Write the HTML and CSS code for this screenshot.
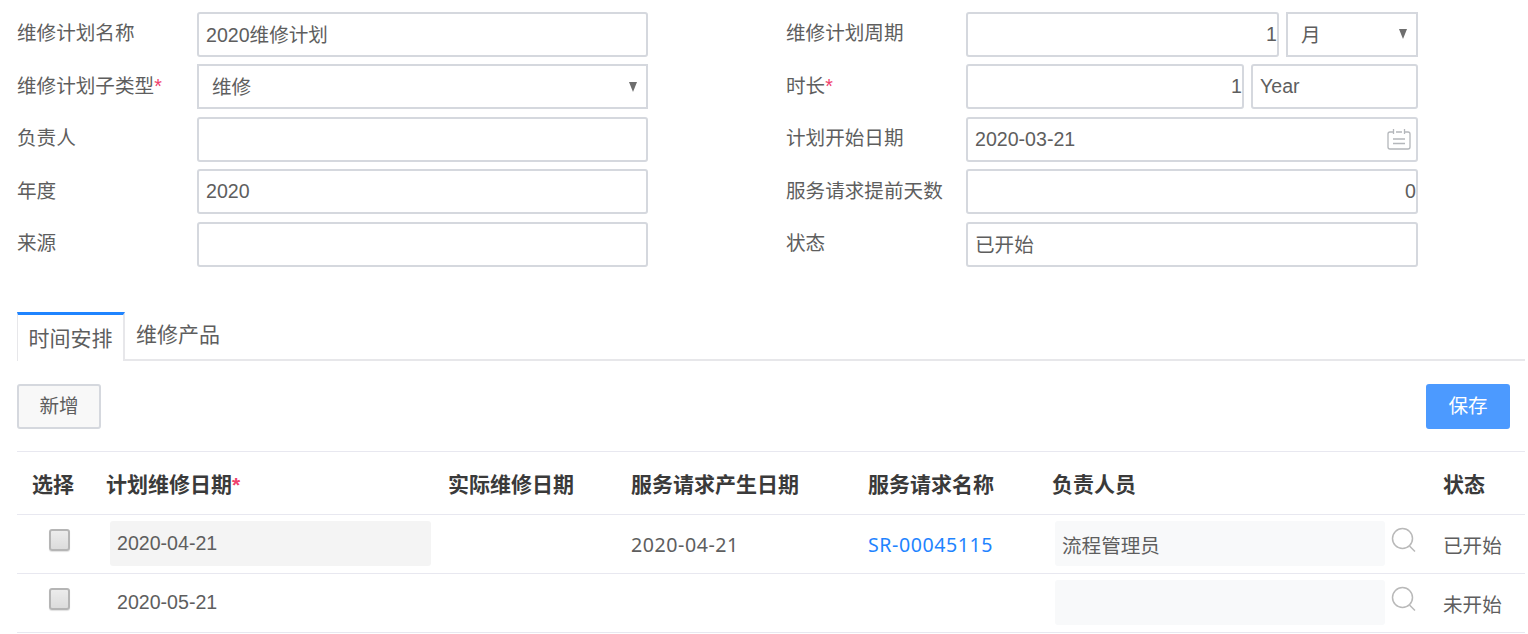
FILE: index.html
```html
<!DOCTYPE html>
<html lang="zh-CN">
<head>
<meta charset="utf-8">
<title>维修计划</title>
<link rel="stylesheet" href="styles.css">
</head>
<body>
<main class="page">
  <section class="form">
    <div class="col">
      <div class="row"><div class="label">维修计划名称</div><div class="field"><div class="box cjk">2020维修计划</div></div></div>
      <div class="row"><div class="label">维修计划子类型<span class="req">*</span></div><div class="field"><div class="box sel square"><span class="sel-text">维修</span><span class="caret"></span></div></div></div>
      <div class="row"><div class="label">负责人</div><div class="field"><div class="box"></div></div></div>
      <div class="row"><div class="label">年度</div><div class="field"><div class="box latin">2020</div></div></div>
      <div class="row"><div class="label">来源</div><div class="field"><div class="box"></div></div></div>
    </div>
    <div class="col">
      <div class="row"><div class="label">维修计划周期</div><div class="field period"><div class="box num">1</div><div class="box sel square"><span class="sel-text">月</span><span class="caret"></span></div></div></div>
      <div class="row"><div class="label">时长<span class="req">*</span></div><div class="field duration"><div class="box num latin">1</div><div class="box unit latin">Year</div></div></div>
      <div class="row"><div class="label">计划开始日期</div><div class="field"><div class="box date">2020-03-21
        <svg class="cal" width="24" height="22" viewBox="0 0 24 22" fill="none" stroke="#b4b7bb" stroke-width="1.3"><path d="M6 4H3a2 2 0 0 0-2 2v13a2 2 0 0 0 2 2h18a2 2 0 0 0 2-2V6a2 2 0 0 0-2-2h-3M6.500 1v5M17.500 1v5M9 4h6M6 11h12M6 15.500h12"/></svg>
      </div></div></div>
      <div class="row"><div class="label">服务请求提前天数</div><div class="field"><div class="box num latin">0</div></div></div>
      <div class="row"><div class="label">状态</div><div class="field"><div class="box cjk">已开始</div></div></div>
    </div>
  </section>

  <nav class="tabs">
    <div class="tab active">时间安排</div>
    <div class="tab">维修产品</div>
  </nav>

  <div class="toolbar">
    <button class="btn">新增</button>
    <button class="btn primary">保存</button>
  </div>

  <table class="grid">
    <colgroup><col class="c1"><col class="c2"><col class="c3"><col class="c4"><col class="c5"><col class="c6"><col class="c7"></colgroup>
    <thead>
      <tr><th>选择</th><th class="th-date">计划维修日期<span class="req">*</span></th><th>实际维修日期</th><th>服务请求产生日期</th><th>服务请求名称</th><th>负责人员</th><th>状态</th></tr>
    </thead>
    <tbody>
      <tr>
        <td><span class="check"></span></td>
        <td class="cell-date"><div class="fill grey">2020-04-21</div></td>
        <td></td>
        <td class="wide">2020-04-21</td>
        <td class="wide"><a class="link">SR-00045115</a></td>
        <td class="cell-person"><div class="person"><div class="fill light">流程管理员</div><svg class="search" width="25" height="26" viewBox="0 0 25 26" fill="none" stroke="#b9b9b9" stroke-width="1.500"><circle cx="11.500" cy="11.500" r="10"/><path d="M18.500 19l5.500 5.500"/></svg></div></td>
        <td>已开始</td>
      </tr>
      <tr>
        <td><span class="check"></span></td>
        <td class="cell-date"><div class="fill">2020-05-21</div></td>
        <td></td>
        <td></td>
        <td></td>
        <td class="cell-person"><div class="person"><div class="fill light"></div><svg class="search" width="25" height="26" viewBox="0 0 25 26" fill="none" stroke="#b9b9b9" stroke-width="1.500"><circle cx="11.500" cy="11.500" r="10"/><path d="M18.500 19l5.500 5.500"/></svg></div></td>
        <td>未开始</td>
      </tr>
    </tbody>
  </table>
</main>
</body>
</html>
```
FILE: styles.css
```css
* { box-sizing: border-box; }
html, body { margin: 0; padding: 0; background: #fff; overflow: hidden; }
body {
  font-family: "Liberation Sans", "Noto Sans CJK SC", sans-serif;
  font-size: 19.600px;
  color: #5e5e5e;
}
.page { padding: 11.750px 3px 0 17px; }

.form { display: flex; gap: 138px; }
.col { display: flex; flex-direction: column; gap: 7.500px; }
.col:first-child { width: 631px; }
.col:last-child { width: 632px; }
.row { display: grid; grid-template-columns: 180px 1fr; height: 45px; align-items: center; }
.label { padding-bottom: 5px; white-space: nowrap; }
.req { color: #f0416c; }
.field { display: flex; gap: 7px; height: 45px; }
.period .num { width: 313px; flex: none; }
.period .sel { flex: 1; }
.duration .num { width: 278px; flex: none; }
.duration .unit { flex: 1; }
.box {
  flex: 1;
  min-width: 0;
  height: 45px;
  display: flex;
  align-items: center;
  padding: 0 7px;
  border: 2px solid #d5d8de;
  border-radius: 3px;
  background: #fff;
  line-height: 24px;
  white-space: nowrap;
}
.cjk { padding-top: 2px; }
.latin { padding-bottom: 2px; }
.square { border-radius: 0; }
.num { justify-content: flex-end; padding-right: 0; }
.sel { justify-content: space-between; padding: 0 9px 0 13px; }
.sel-text { padding-top: 1px; }
.caret {
  width: 0; height: 0;
  border-left: 4.500px solid transparent;
  border-right: 4.500px solid transparent;
  border-top: 10px solid #6e6e6e;
}
.date { justify-content: space-between; padding-right: 5px; }
.cal { flex: none; }

.tabs {
  display: flex;
  height: 49px;
  margin-top: 44.750px;
  border-bottom: 2px solid #e7e7ea;
  font-size: 21px;
}
.tab { padding: 8px 12px 0 11px; line-height: 30px; }
.tab.active {
  width: 108px;
  height: 49px;
  padding: 9px 0 0;
  text-align: center;
  border-top: 3px solid #1f84ff;
  border-left: 1px solid #e7e7ea;
  border-right: 2px solid #e7e7ea;
  background: #fff;
}

.toolbar {
  display: flex;
  justify-content: space-between;
  margin-top: 23.500px;
  padding-right: 15px;
  height: 45px;
}
.btn {
  width: 84px;
  height: 45px;
  padding: 0 0 5px;
  font: inherit;
  font-size: 19.600px;
  color: #5e5e5e;
  background: #f8f8f8;
  border: 2px solid #d5d8de;
  border-radius: 3px;
}
.btn.primary { background: #4c9aff; border-color: #4c9aff; color: #fff; }

.grid {
  width: 100%;
  margin-top: 22px;
  table-layout: fixed;
  border-collapse: collapse;
  border-top: 1px solid #e8e8f0;
}
.c1 { width: 75px; }
.c2 { width: 341px; }
.c3 { width: 183px; }
.c4 { width: 237px; }
.c5 { width: 184px; }
.c6 { width: 391px; }
th, td { padding: 0 0 0 15px; text-align: left; border-bottom: 1px solid #e8e8f0; white-space: nowrap; }
th { height: 63px; font-weight: 700; font-size: 21px; color: #3a3a3a; padding-bottom: 1px; }
.th-date { padding-left: 14px; }
td { height: 59px; padding-top: 1px; }
td:first-child { padding-left: 32px; }
.wide { font-family: "Noto Sans", "Noto Sans CJK SC", sans-serif; letter-spacing: .55px; padding-top: 0; }
.cell-date { padding-left: 18px; padding-right: 2px; padding-top: 0; padding-bottom: 1px; }
.cell-person { padding-left: 18px; padding-top: 0; padding-bottom: 1px; }
.fill { height: 45px; display: flex; align-items: center; padding: 0 7px 1px; border-radius: 3px; }
.grey { background: #f4f4f4; }
.light { background: #f8f9fa; flex: 1; padding: 1px 7px 0; }
.person { display: flex; align-items: center; gap: 6px; }
.search { flex: none; margin: 0 12px 8px 0; }
.link { color: #1f84ff; }
.check {
  display: block;
  width: 21px;
  height: 22px;
  margin-bottom: 10px;
  border: 2px solid #b5b5b5;
  border-radius: 3px;
  background: linear-gradient(#ececec, #dcdcdc);
  box-shadow: 0 1px 1px rgba(0,0,0,.12);
}
```
